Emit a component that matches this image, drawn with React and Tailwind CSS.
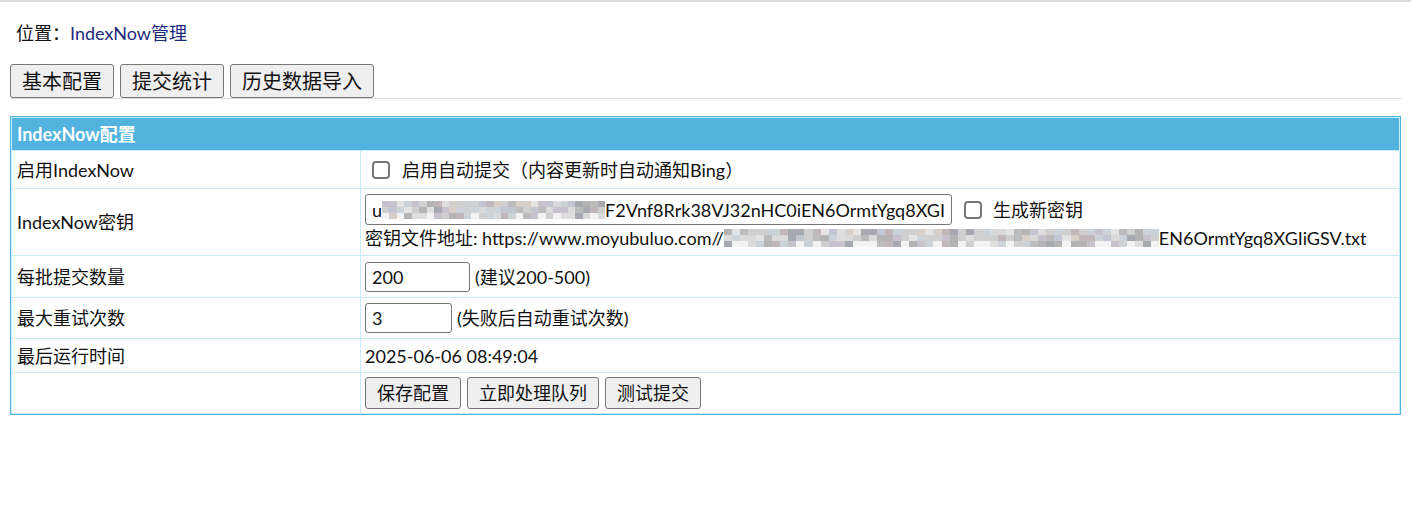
import React from 'react';

const shades = ['#e4e4e4', '#d0d0d0', '#c3c6d2', '#d8d0c8', '#b4b4b4', '#cbd3d9', '#c1b7ba', '#a6aab0', '#dedede', '#bcbcbc', '#dadada', '#c8c2ce', '#cfcfcf'];

// pixelated blur block standing in for the masked key
function Mosaic({ width, seed, className = '' }) {
  let s = seed;
  const rnd = () => {
    s = (s * 9301 + 49297) % 233280;
    return s / 233280;
  };
  const cols = Math.round((width || 240) / 8);
  const rows = [0, 1, 2].map((r) =>
    Array.from({ length: cols }, () => {
      const v = rnd();
      if (r === 2 && v < 0.3) return '#f3f3f3';
      return shades[Math.floor(v * shades.length)];
    })
  );
  return (
    <span className={`inline-flex flex-col align-middle ${className}`} style={width ? { width } : undefined}>
      {rows.map((row, i) => (
        <span key={i} className="flex h-[6px]">
          {row.map((c, j) => (
            <span key={j} className="flex-1 h-full" style={{ background: c }} />
          ))}
        </span>
      ))}
    </span>
  );
}

function Box({ className = '' }) {
  return <span className={`inline-block shrink-0 w-[18px] h-[18px] border-2 border-[#767676] rounded-[4px] bg-white align-middle ${className}`} />;
}

function Btn({ children }) {
  return (
    <button className="h-[32px] px-[11px] text-[18px] leading-none bg-[#efefef] border border-[#767676] rounded-[3px] text-[#111]">
      {children}
    </button>
  );
}

const label = 'w-[349px] px-[5px] border border-[#c9ebf9] text-left align-middle';
const cell = 'px-[4px] border border-[#c9ebf9] align-middle';

export default function App() {
  return (
    <div className="min-h-screen bg-white border-t-2 border-[#dcdcdc] text-[18px] text-[#111] font-['Lato','Noto_Sans_CJK_SC',sans-serif]">
      <div className="px-4 pt-[19px] leading-[24px]">
        位置：<span className="text-[#1c2a7c]">IndexNow管理</span>
      </div>

      <div className="mx-[10px] mt-[19px] flex gap-[6px] border-b border-[#dddddd]">
        {['基本配置', '提交统计', '历史数据导入'].map((t) => (
          <button key={t} className="h-[34px] px-[11px] text-[20px] leading-none bg-[#efefef] border border-[#767676] rounded-[3px] text-[#111]">
            {t}
          </button>
        ))}
      </div>

      <div className="mx-[10px] mt-[17px] border border-[#4fb4e0]">
        <table className="w-full border-collapse border border-[#c9ebf9] leading-[24px]">
          <tbody>
            <tr>
              <th colSpan={2} className="h-[33px] px-[5px] bg-[#52b4de] text-white font-bold text-left border border-[#c9ebf9]">
                IndexNow配置
              </th>
            </tr>
            <tr className="h-[38px]">
              <td className={label}>启用IndexNow</td>
              <td className={cell}>
                <span className="flex items-center">
                  <Box className="ml-[7px]" />
                  <span className="ml-[12px]">启用自动提交（内容更新时自动通知Bing）</span>
                </span>
              </td>
            </tr>
            <tr className="h-[67px]">
              <td className={label}>IndexNow密钥</td>
              <td className={cell}>
                <div className="flex items-center">
                  <div className="w-[587px] h-[31px] border border-[#767676] rounded-[3px] pl-[6px] pr-[6px] flex items-center overflow-hidden whitespace-nowrap">
                    <span>u</span>
                    <Mosaic className="flex-1" seed={17} />
                    <span>F2Vnf8Rrk38VJ32nHC0iEN6OrmtYgq8XGI</span>
                  </div>
                  <Box className="ml-[12px]" />
                  <span className="ml-[11px]">生成新密钥</span>
                </div>
                <div className="flex items-center whitespace-nowrap mt-[1px]">
                  <span>密钥文件地址: https://www.moyubuluo.com//</span>
                  <Mosaic width={435} seed={53} />
                  <span>EN6OrmtYgq8XGIiGSV.txt</span>
                </div>
              </td>
            </tr>
            <tr className="h-[42px]">
              <td className={label}>每批提交数量</td>
              <td className={cell}>
                <div className="flex items-center">
                  <div className="w-[105px] h-[30px] border border-[#767676] rounded-[3px] px-[6px] flex items-center">200</div>
                  <span className="ml-[5px]">(建议200-500)</span>
                </div>
              </td>
            </tr>
            <tr className="h-[41px]">
              <td className={label}>最大重试次数</td>
              <td className={cell}>
                <div className="flex items-center">
                  <div className="w-[87px] h-[30px] border border-[#767676] rounded-[3px] px-[6px] flex items-center">3</div>
                  <span className="ml-[5px]">(失败后自动重试次数)</span>
                </div>
              </td>
            </tr>
            <tr className="h-[34px]">
              <td className={label}>最后运行时间</td>
              <td className={cell}>2025-06-06 08:49:04</td>
            </tr>
            <tr className="h-[41px]">
              <td className={label}></td>
              <td className={cell}>
                <div className="flex gap-[6px]">
                  <Btn>保存配置</Btn>
                  <Btn>立即处理队列</Btn>
                  <Btn>测试提交</Btn>
                </div>
              </td>
            </tr>
          </tbody>
        </table>
      </div>
    </div>
  );
}
